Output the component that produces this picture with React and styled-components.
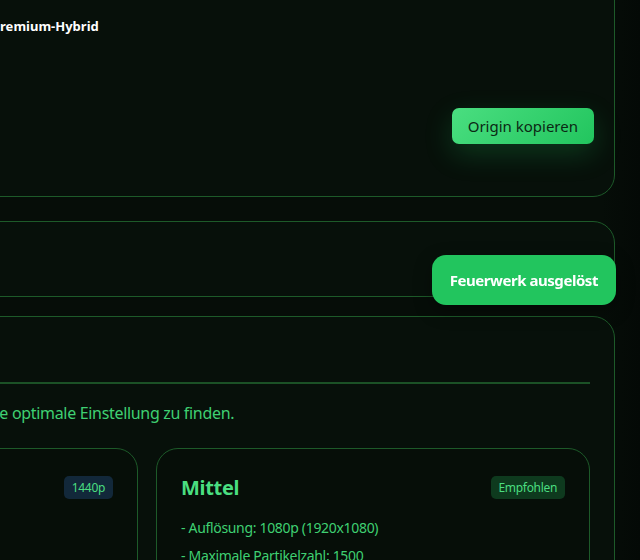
import React from "react";
import styled, { createGlobalStyle } from "styled-components";

const GlobalStyle = createGlobalStyle`
  html, body {
    margin: 0;
    padding: 0;
    background: #050b07;
    overflow: hidden;
  }
  body {
    font-family: "Noto Sans", "Open Sans", Arial, sans-serif;
    letter-spacing: -0.02em;
    color: #d8f5e0;
  }
  * { box-sizing: border-box; }
`;

const Page = styled.div`
  width: 640px;
  height: 560px;
  overflow: hidden;
  display: flex;
  justify-content: flex-end;
  padding-right: 25px;
  background: linear-gradient(90deg, #060d08 0%, #060d08 94%, #040906 100%);
`;

const Column = styled.main`
  flex: 0 0 936px;
  display: flex;
  flex-direction: column;
  margin-top: -53px;
`;

const Card = styled.section`
  background: #07100a;
  border: 1px solid #1d5a29;
  border-radius: 22px;
  padding: ${(p) => p.$pad || "24px"};
  margin-bottom: ${(p) => p.$gap || "24px"};
`;

const CardTitle = styled.h2`
  margin: 0 0 16px;
  font-size: 20px;
  line-height: 28px;
  font-weight: 700;
  color: #4ade80;
`;

const InfoRow = styled.div`
  display: grid;
  grid-template-columns: 280px 1fr;
  column-gap: 8px;
  font-size: 13px;
  line-height: 20px;
`;

const InfoLabel = styled.span`
  color: #86b394;
`;

const InfoValue = styled.span`
  color: #ffffff;
  font-weight: 700;
  letter-spacing: 0;
`;

const Actions = styled.div`
  display: flex;
  align-items: center;
  justify-content: space-between;
  margin-top: 72px;
`;

const Hint = styled.span`
  font-size: 13px;
  color: #5f8a6c;
`;

const PrimaryButton = styled.button`
  height: 36px;
  padding: 0 16px;
  border: none;
  border-radius: 7px;
  background: linear-gradient(135deg, #4ade80 0%, #22c55e 100%);
  color: #0b2814;
  font-family: inherit;
  font-size: 15px;
  letter-spacing: 0;
  cursor: pointer;
  box-shadow: 0 10px 28px rgba(34, 197, 94, 0.22);
`;

const FireworkRow = styled.div`
  display: flex;
  align-items: center;
  gap: 12px;
  height: 34px;
`;

const SectionHeader = styled.div`
  border-bottom: 2px solid #1b5126;
  padding-bottom: 15px;
  margin-bottom: 18px;
`;

const SectionTitle = styled.h2`
  margin: 0;
  font-size: 20px;
  line-height: 26px;
  font-weight: 700;
  color: #4ade80;
`;

const Lead = styled.p`
  margin: 0 0 24px;
  font-size: 16px;
  line-height: 22px;
  color: #3fd072;
`;

const TierGrid = styled.div`
  display: grid;
  grid-template-columns: 1fr 1fr;
  gap: 18px;
`;

const TierCard = styled.article`
  background: #060e08;
  border: 1px solid #1d5a29;
  border-radius: 22px;
  padding: 24px;
  min-height: 200px;
`;

const TierHead = styled.div`
  display: flex;
  align-items: center;
  justify-content: space-between;
  height: 28px;
  margin-bottom: 13px;
`;

const TierName = styled.h3`
  margin: 0;
  font-size: 20px;
  font-weight: 700;
  color: #4ade80;
`;

const Badge = styled.span`
  display: inline-flex;
  align-items: center;
  height: 23px;
  padding: 0 8px;
  border-radius: 5px;
  font-size: 12px;
  color: #4ade80;
  background: ${(p) => (p.$tone === "blue" ? "#12283a" : "#0e3a1e")};
`;

const SpecList = styled.ul`
  list-style: none;
  margin: 0;
  padding: 0;
`;

const Spec = styled.li`
  font-size: 14px;
  line-height: 28px;
  color: #3fd072;
`;

const Toast = styled.div`
  position: fixed;
  top: 255px;
  right: 24px;
  height: 50px;
  padding: 0 18px;
  display: flex;
  align-items: center;
  border-radius: 14px;
  background: #22c55e;
  color: #ffffff;
  font-size: 15px;
  font-weight: 700;
  letter-spacing: -0.03em;
  box-shadow: 0 6px 18px rgba(0, 0, 0, 0.35);
`;

const tiers = [
  {
    name: "Hoch",
    badge: "1440p",
    tone: "blue",
    specs: ["- Auflösung: 1440p (2560x1440)", "- Maximale Partikelzahl: 3000"],
  },
  {
    name: "Mittel",
    badge: "Empfohlen",
    tone: "green",
    specs: ["- Auflösung: 1080p (1920x1080)", "- Maximale Partikelzahl: 1500"],
  },
];

export default function App() {
  return (
    <>
      <GlobalStyle />
      <Page>
        <Column>
          <Card $pad="24px 20px 52px 24px" $gap="24px">
            <CardTitle>Renderer</CardTitle>
            <InfoRow>
              <InfoLabel>Aktiver Modus:</InfoLabel>
              <InfoValue>Premium-Hybrid</InfoValue>
            </InfoRow>
            <Actions>
              <Hint>Origin</Hint>
              <PrimaryButton>Origin kopieren</PrimaryButton>
            </Actions>
          </Card>

          <Card $pad="20px 24px" $gap="19px">
            <FireworkRow>
              <SectionTitle>Feuerwerk</SectionTitle>
            </FireworkRow>
          </Card>

          <Card $gap="0">
            <SectionHeader>
              <SectionTitle>Qualitätsstufen</SectionTitle>
            </SectionHeader>
            <Lead>
              Vergleiche die vier Qualitätsstufen, um die optimale Einstellung zu finden.
            </Lead>
            <TierGrid>
              {tiers.map((t) => (
                <TierCard key={t.name}>
                  <TierHead>
                    <TierName>{t.name}</TierName>
                    <Badge $tone={t.tone}>{t.badge}</Badge>
                  </TierHead>
                  <SpecList>
                    {t.specs.map((s) => (
                      <Spec key={s}>{s}</Spec>
                    ))}
                  </SpecList>
                </TierCard>
              ))}
            </TierGrid>
          </Card>
        </Column>
      </Page>
      <Toast>Feuerwerk ausgelöst</Toast>
    </>
  );
}
